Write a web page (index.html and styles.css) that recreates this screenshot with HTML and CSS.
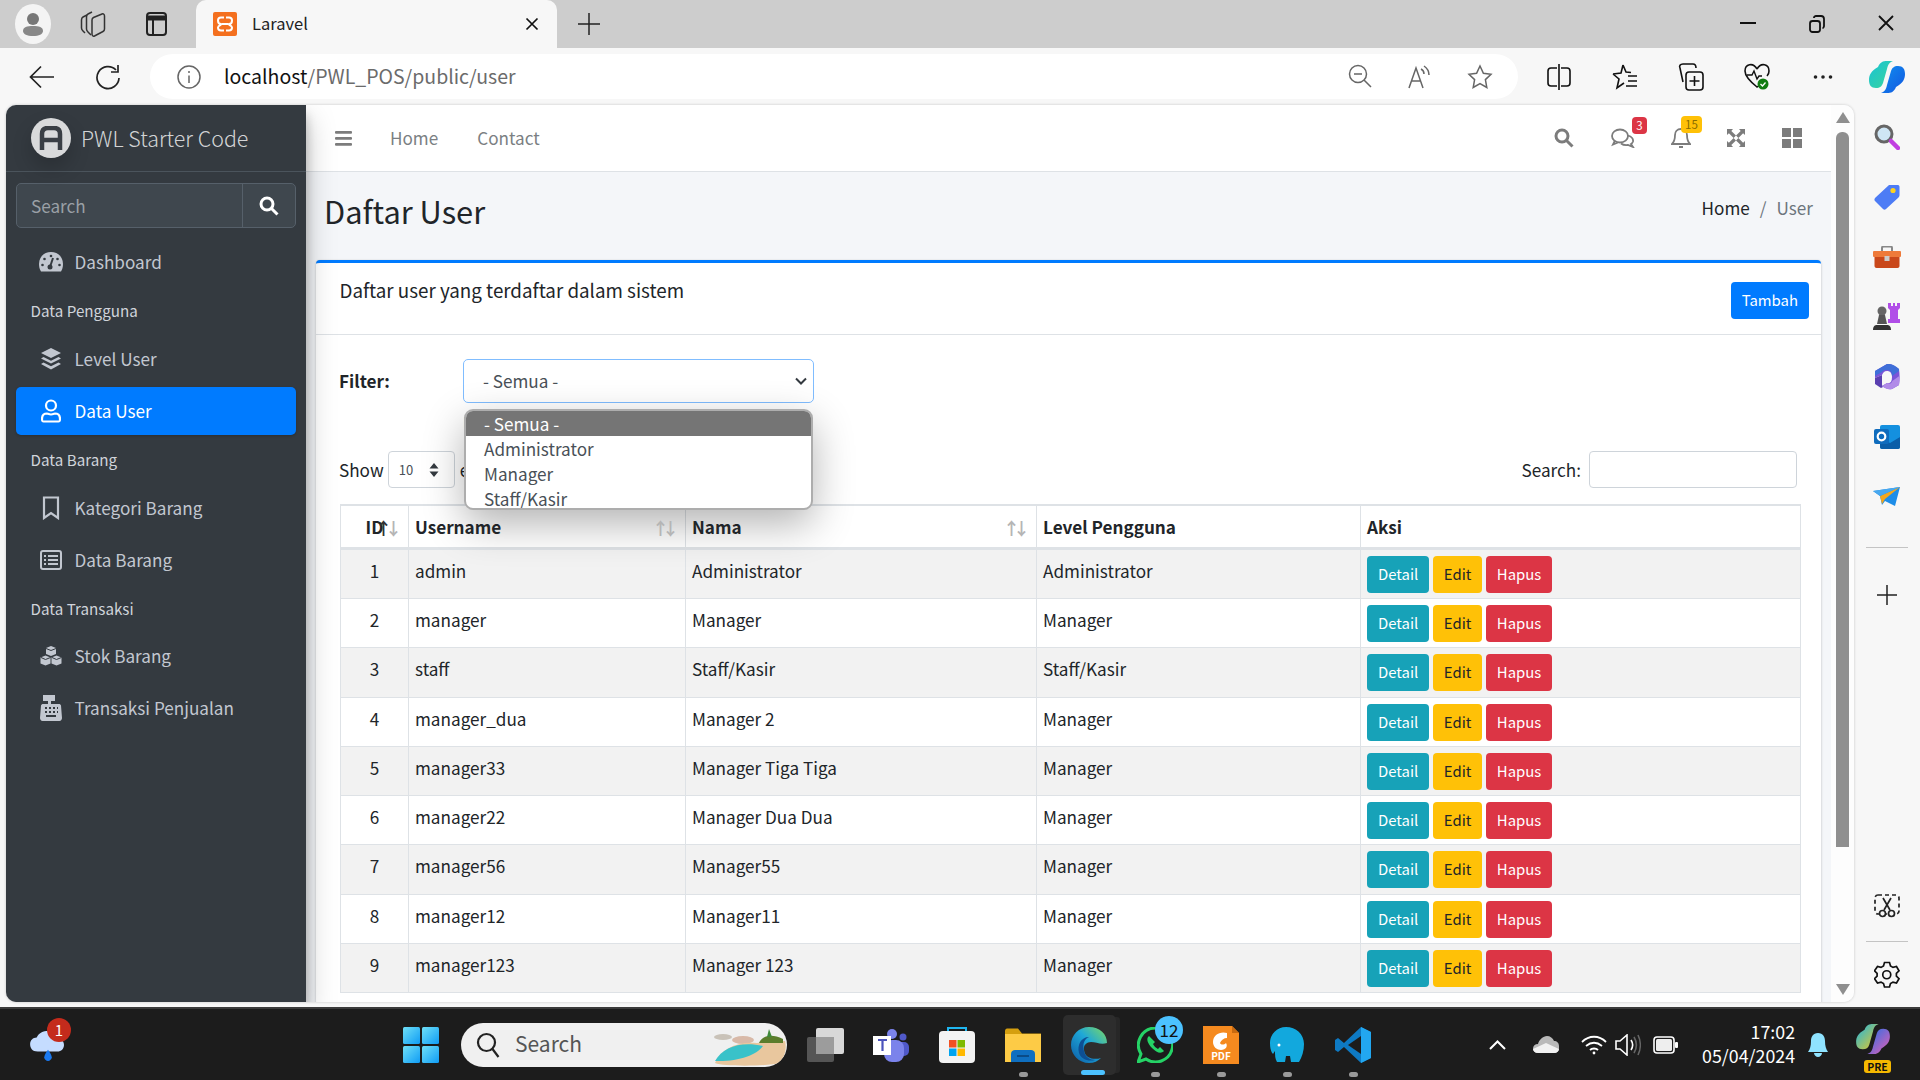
FILE: index.html
```html
<!DOCTYPE html>
<html lang="id">
<head>
    <meta charset="UTF-8">
    <title>Laravel</title>
    <link rel="stylesheet" href="styles.css">
</head>
<body>
<div class="screen">

    <div class="tab-strip">
        <div class="profile">
            <svg width="24" height="26" viewBox="0 0 24 26"><circle cx="12" cy="8" r="6" fill="#777"/><path d="M2 20c0-4 4-5 10-5s10 1 10 5c0 3-4 5-10 5S2 23 2 20z" fill="#888"/></svg>
        </div>
        <svg class="strip-collections" width="26" height="28" viewBox="0 0 26 28" fill="none" stroke="#333" stroke-width="1.5"><path d="M7 5L3 7c-1 .5-1.500 1.500-1.500 3v8c0 1 .5 2 1.500 3l2 2"/><path d="M12 2L8 4C7 4.500 6.500 5.500 6.500 7v12c0 1 .5 2 1.500 3l3 3"/><path d="M12 10c0-1 .5-2 1.500-2.500L22 4c1.500-.5 2.500.5 2.500 2v13c0 1-.5 2-1.500 2.500L14.500 26c-1.500.5-2.500-.5-2.500-2z"/></svg>
        <svg class="strip-tabs" width="24" height="26" viewBox="0 0 24 26" fill="none" stroke="#222" stroke-width="2"><rect x="3" y="2" width="19" height="22" rx="3"/><path d="M3 7h19" stroke-width="5"/><path d="M9 8v15"/></svg>
        <div class="tab">
            <span class="tab-icon">
                <svg width="18" height="18" viewBox="0 0 18 18" fill="none" stroke="#fff" stroke-width="2"><path d="M8 2.500H5C3 2.500 2 3.500 2 5.500S3 9 5 9 2 10.500 2 12.500s1 3 3 3h3"/><path d="M10 2.500h3c2 0 3 1 3 3S15 9 13 9s3 1.500 3 3.500-1 3-3 3h-3"/><path d="M6 9h6"/></svg>
            </span>
            <span class="tab-title">Laravel</span>
            <svg class="tab-close" width="14" height="14" viewBox="0 0 14 14" stroke="#111" stroke-width="1.7"><path d="M1.500 1.500l11 11M12.500 1.500l-11 11"/></svg>
        </div>
        <svg class="strip-plus" width="22" height="22" viewBox="0 0 22 22" stroke="#222" stroke-width="1.5"><path d="M11 0v22M0 11h22"/></svg>
        <div class="window-btns">
            <span class="window-btn"><svg width="16" height="16" viewBox="0 0 16 16" stroke="#111" stroke-width="2"><path d="M0 8h16"/></svg></span>
            <span class="window-btn"><svg width="16" height="18" viewBox="0 0 16 18" fill="none" stroke="#111" stroke-width="1.8"><rect x="1" y="6" width="10" height="11" rx="2.500"/><path d="M5 3V2.500C5 1.600 6 1 7 1h5c2 0 3 1 3 3v7c0 1-1 2-1.500 2"/></svg></span>
            <span class="window-btn"><svg width="16" height="16" viewBox="0 0 16 16" stroke="#111" stroke-width="1.800"><path d="M1 1l14 14M15 1L1 15"/></svg></span>
        </div>
    </div>

    <div class="toolbar">
        <svg class="tool-back" width="26" height="24" viewBox="0 0 26 24" fill="none" stroke="#222" stroke-width="1.700"><path d="M25 12H2M12 1.500L1.500 12 12 22.500"/></svg>
        <svg class="tool-reload" width="26" height="26" viewBox="0 0 26 26" fill="none" stroke="#222" stroke-width="1.700"><path d="M21 6a11 11 0 1 0 3 8"/><path d="M23 1v7h-7"/></svg>
        <div class="address">
            <svg class="address-info" width="24" height="24" viewBox="0 0 24 24" fill="none" stroke="#666" stroke-width="1.500"><circle cx="12" cy="12" r="11"/><path d="M12 10.500V18M12 6v2"/></svg>
            <span class="url"><b>localhost</b>/PWL_POS/public/user</span>
            <div class="address-tools">
                <span class="address-tool"><svg width="24" height="24" viewBox="0 0 24 24" fill="none" stroke="#666" stroke-width="1.500"><circle cx="10" cy="10" r="8.500"/><path d="M16 16l7 7M6 10h8"/></svg></span>
                <span class="address-tool"><svg width="26" height="26" viewBox="0 0 26 26" fill="none" stroke="#666" stroke-width="1.500"><path d="M2 24L9 4l7 20M4.500 17h9"/><path d="M14 5c2 1 3 3 3 5M17 2c3 2 5 5 5 9"/></svg></span>
                <span class="address-tool"><svg width="26" height="26" viewBox="0 0 26 26" fill="none" stroke="#666" stroke-width="1.500"><path d="M13 2l3.400 7.200 7.600 1-5.600 5.400 1.400 7.900L13 19.700l-6.800 3.800 1.400-7.900L2 10.200l7.600-1z"/></svg></span>
            </div>
        </div>
        <div class="tool-group">
            <span class="tool-btn"><svg width="24" height="26" viewBox="0 0 24 26" fill="none" stroke="#111" stroke-width="1.600"><path d="M10 4H4C2 4 1 5 1 7v12c0 2 1 3 3 3h6M14 4h6c2 0 3 1 3 3v12c0 2-1 3-3 3h-6M12 0v26"/></svg></span>
            <span class="tool-btn"><svg width="26" height="26" viewBox="0 0 26 26" fill="none" stroke="#111" stroke-width="1.600"><path d="M11 1l3 7 5 .5M1 10l6 5-2 9 7-5M1 10l8-1 2-8"/><path d="M16 12h9M16 17h9M14 22h11"/></svg></span>
            <span class="tool-btn"><svg width="26" height="28" viewBox="0 0 26 28" fill="none" stroke="#111" stroke-width="1.600"><path d="M15 1H5C2 1 1 3 2 5l3 14"/><path d="M15 1c2 0 3 2 3 4"/><rect x="8" y="9" width="17" height="18" rx="3"/><path d="M16.500 13v10M11.500 18h10"/></svg></span>
            <span class="tool-btn"><svg width="26" height="28" viewBox="0 0 26 28"><path d="M13 6C9-1 1 1 1 8c0 6 7 12 12 16 2-1 5-4 7-6M13 6c4-7 12-5 12 2 0 2-1 4-2 5" fill="none" stroke="#111" stroke-width="1.600"/><path d="M3 12h5l2-4 3 8 2-3h3" fill="none" stroke="#111" stroke-width="1.400"/><circle cx="19" cy="21" r="5.500" fill="#107c10"/><path d="M16.500 21l2 2 3-3.500" fill="none" stroke="#fff" stroke-width="1.300"/></svg></span>
            <span class="tool-btn"><svg width="20" height="6" viewBox="0 0 20 6" fill="#222"><circle cx="2.500" cy="3" r="1.800"/><circle cx="10" cy="3" r="1.800"/><circle cx="17.500" cy="3" r="1.800"/></svg></span>
            <span class="tool-btn copilot-slot">
                <svg width="36" height="32" viewBox="0 0 36 32"><defs><linearGradient id="cop1" x1="0" y1="0" x2="1" y2="1"><stop offset="0" stop-color="#19c3d6"/><stop offset="1" stop-color="#3bd59a"/></linearGradient><linearGradient id="cop2" x1="0" y1="0" x2="1" y2="1"><stop offset="0" stop-color="#0f8ff0"/><stop offset="1" stop-color="#1357e0"/></linearGradient></defs><path d="M9 6c2-5 5-6 9-6h6c-3 1-5 3-6 8l-4 14c-1 3-3 5-7 5-5 0-7-3-7-8 0-5 2-9 9-13z" fill="url(#cop1)"/><path d="M27 26c-2 5-5 6-9 6h-6c3-1 5-3 6-8l4-14c1-3 3-5 7-5 5 0 7 3 7 8 0 5-2 9-9 13z" fill="url(#cop2)"/></svg>
            </span>
        </div>
    </div>

    <div class="middle">
        <div class="viewport">
            <aside class="sidebar">
                <div class="brand">
                    <span class="brand-logo">
                        <svg width="24" height="24" viewBox="0 0 24 24" fill="none" stroke="#3a3f45" stroke-width="4.500"><path d="M3 24V8c0-4 2-6 6-6h6c4 0 6 2 6 6v16M3 14h18"/></svg>
                    </span>
                    <span class="brand-text">PWL Starter Code</span>
                </div>
                <div class="side-search">
                    <input class="side-search-input" type="text" placeholder="Search">
                    <span class="side-search-btn">
                        <svg width="20" height="20" viewBox="0 0 20 20" fill="none" stroke="#fff" stroke-width="3"><circle cx="8" cy="8" r="6"/><path d="M12.500 12.500L18.500 18.500"/></svg>
                    </span>
                </div>
                <nav class="side-nav">
                    <a class="nav-link"><span class="nav-icon"><svg width="24" height="20" viewBox="0 0 24 20"><path d="M12 0C5 0 0 5 0 12c0 3 .6 5 2 7.500h20c1.400-2.500 2-4.500 2-7.500C24 5 19 0 12 0z" fill="#c2c7d0"/><path d="M11 15l3-9" stroke="#343a40" stroke-width="2"/><circle cx="11" cy="15" r="2.500" fill="#343a40"/><circle cx="12" cy="4" r="1.300" fill="#343a40"/><circle cx="5.500" cy="7" r="1.300" fill="#343a40"/><circle cx="18.500" cy="7" r="1.300" fill="#343a40"/><circle cx="3.500" cy="13" r="1.300" fill="#343a40"/><circle cx="20.500" cy="13" r="1.300" fill="#343a40"/></svg></span><span>Dashboard</span></a>
                    <div class="nav-header">Data Pengguna</div>
                    <a class="nav-link"><span class="nav-icon"><svg width="22" height="22" viewBox="0 0 22 22" fill="#c2c7d0"><path d="M11 0l10 5-10 5L1 5z"/><path d="M3.500 9L1 10.500l10 5 10-5L18.500 9 11 12.800z"/><path d="M3.500 14.500L1 16l10 5.500L21 16l-2.500-1.500L11 18.300z"/></svg></span><span>Level User</span></a>
                    <a class="nav-link nav-link-active"><span class="nav-icon"><svg width="20" height="24" viewBox="0 0 20 24" fill="none" stroke="#fff" stroke-width="2.200"><circle cx="10" cy="6.500" r="5"/><path d="M2.500 22.500c-1.500 0-1.500-1-1.500-2.500 0-3.500 2-5.500 5-5.500 1.500.5 2.500 1 4 1s2.500-.5 4-1c3 0 5 2 5 5.500 0 1.500 0 2.500-1.500 2.500z"/></svg></span><span>Data User</span></a>
                    <div class="nav-header">Data Barang</div>
                    <a class="nav-link"><span class="nav-icon"><svg width="18" height="24" viewBox="0 0 18 24" fill="none" stroke="#c2c7d0" stroke-width="2.200"><path d="M2 1.500h14v20.500l-7-5-7 5z"/></svg></span><span>Kategori Barang</span></a>
                    <a class="nav-link"><span class="nav-icon"><svg width="22" height="20" viewBox="0 0 22 20" fill="none" stroke="#c2c7d0" stroke-width="2"><rect x="1" y="1" width="20" height="18" rx="2"/><path d="M8 6h10M8 10h10M8 14h10M4 6h2M4 10h2M4 14h2"/></svg></span><span>Data Barang</span></a>
                    <div class="nav-header">Data Transaksi</div>
                    <a class="nav-link"><span class="nav-icon"><svg width="22" height="20" viewBox="0 0 22 20" fill="#c2c7d0"><path d="M11 0l5 2v6l-5 2-5-2V2z"/><path d="M5.500 9.500l5 2v6l-5 2-5-2v-6z"/><path d="M16.500 9.500l5 2v6l-5 2-5-2v-6z"/><path d="M6 2.500l5 2 5-2M1 11.500l4.500 2 5-2M12 11.500l4.500 2 5-2" fill="none" stroke="#343a40"/></svg></span><span>Stok Barang</span></a>
                    <a class="nav-link"><span class="nav-icon"><svg width="22" height="26" viewBox="0 0 22 26" fill="#c2c7d0"><path d="M3 0h12v6h-4v3h8c1 0 1.500.5 2 1.500l1 12.500c0 1.500-1 3-2.500 3h-17C1 26 0 24.500 0 23l1-12.500C1.500 9.500 2 9 3 9h5V6H3z"/><path d="M5 13h2M9 13h2M13 13h2M17 13h1M5 17h2M9 17h2M13 17h2M17 17h1M6 21h10" stroke="#343a40" stroke-width="1.800"/></svg></span><span>Transaksi Penjualan</span></a>
                </nav>
            </aside>

            <main class="main">
                <div class="navbar">
                    <svg class="nav-burger" width="17" height="15" viewBox="0 0 17 15" fill="#7c7c7c"><rect width="17" height="2.800" rx="1"/><rect y="6" width="17" height="2.800" rx="1"/><rect y="12" width="17" height="2.800" rx="1"/></svg>
                    <a class="top-link top-link-home">Home</a>
                    <a class="top-link top-link-contact">Contact</a>
                    <div class="top-icons">
                        <span class="top-icon"><svg width="20" height="20" viewBox="0 0 20 20" fill="none" stroke="#7c7c7c" stroke-width="3"><circle cx="8" cy="8" r="6"/><path d="M12.500 12.500L18.500 18.500"/></svg></span>
                        <span class="top-icon top-icon-comments">
                            <svg width="24" height="20" viewBox="0 0 24 20" fill="none" stroke="#7c7c7c" stroke-width="1.800"><ellipse cx="9" cy="8" rx="8" ry="6.500"/><path d="M4 12.500L2 16.500l5-2"/><path d="M17 7.500c3 1 5.500 3 5 6-.3 1-1 2-2 2.500l2 3-5-2c-3 .5-5 0-7-1.500"/></svg>
                            <span class="badge badge-red">3</span>
                        </span>
                        <span class="top-icon top-icon-bell">
                            <svg width="20" height="22" viewBox="0 0 20 22" fill="none" stroke="#7c7c7c" stroke-width="1.800"><path d="M10 2c-4 0-6 3-6 6 0 5-1 7-3 9h18c-2-2-3-4-3-9 0-3-2-6-6-6z"/><path d="M8 20h4"/></svg>
                            <span class="badge badge-yellow">15</span>
                        </span>
                        <span class="top-icon top-icon-expand"><svg width="18" height="18" viewBox="0 0 18 18" fill="#7c7c7c"><path d="M0 0h6L4.300 1.900 9 6.600 6.600 9 1.900 4.300 0 6zM18 0v6l-1.900-1.700L11.400 9 9 6.600l4.700-4.700L12 0zM0 18v-6l1.900 1.700L6.600 9 9 11.400l-4.700 4.700L6 18zM18 18h-6l1.700-1.900L9 11.400 11.400 9l4.700 4.700L18 12z"/></svg></span>
                        <span class="top-icon top-icon-grid"><svg width="20" height="20" viewBox="0 0 20 20" fill="#7c7c7c"><rect width="9" height="9"/><rect x="11" width="9" height="9"/><rect y="11" width="9" height="9"/><rect x="11" y="11" width="9" height="9"/></svg></span>
                    </div>
                </div>

                <div class="content-header">
                    <h1 class="page-title">Daftar User</h1>
                    <div class="breadcrumb">
                        <a class="crumb-link">Home</a>
                        <span class="crumb-sep">/</span>
                        <span class="crumb-now">User</span>
                    </div>
                </div>

                <div class="card">
                    <div class="card-header">
                        <h3 class="card-title">Daftar user yang terdaftar dalam sistem</h3>
                        <a class="btn btn-primary btn-add">Tambah</a>
                    </div>
                    <div class="card-body">
                        <div class="filter-row">
                            <label class="filter-label">Filter:</label>
                            <div class="filter-field">
                                <div class="select-box">
                                    <span>- Semua -</span>
                                    <svg width="12" height="8" viewBox="0 0 12 8" fill="none" stroke="#343a40" stroke-width="2"><path d="M1 1.500l5 5 5-5"/></svg>
                                </div>
                                <small class="filter-help">Level Pengguna</small>
                                <ul class="select-popup">
                                    <li class="popup-option popup-selected">- Semua -</li>
                                    <li class="popup-option">Administrator</li>
                                    <li class="popup-option">Manager</li>
                                    <li class="popup-option">Staff/Kasir</li>
                                </ul>
                            </div>
                        </div>

                        <div class="table-tools">
                            <div class="length-control">
                                <span>Show</span>
                                <div class="length-select">
                                    <span>10</span>
                                    <svg width="10" height="14" viewBox="0 0 10 14" fill="#343a40"><path d="M5 0l4.500 5.500h-9zM5 14L.5 8.500h9z"/></svg>
                                </div>
                                <span class="length-after">entries</span>
                            </div>
                            <div class="search-control">
                                <label>Search:</label>
                                <input class="search-input" type="text">
                            </div>
                        </div>

                        <table class="user-table">
                            <colgroup>
                                <col class="col-id"><col class="col-username"><col class="col-name"><col class="col-level"><col class="col-action">
                            </colgroup>
                            <thead>
                                <tr>
                                    <th class="cell-id">ID<span class="sort-arrows"><i class="sort-up">↑</i><i>↓</i></span></th>
                                    <th>Username<span class="sort-arrows"><i>↑</i><i>↓</i></span></th>
                                    <th>Nama<span class="sort-arrows"><i>↑</i><i>↓</i></span></th>
                                    <th>Level Pengguna</th>
                                    <th>Aksi</th>
                                </tr>
                            </thead>
                            <tbody>
                                <tr><td class="cell-id">1</td><td>admin</td><td>Administrator</td><td>Administrator</td><td><div class="row-btns"><a class="btn btn-info">Detail</a><a class="btn btn-warning">Edit</a><a class="btn btn-danger">Hapus</a></div></td></tr>
                                <tr><td class="cell-id">2</td><td>manager</td><td>Manager</td><td>Manager</td><td><div class="row-btns"><a class="btn btn-info">Detail</a><a class="btn btn-warning">Edit</a><a class="btn btn-danger">Hapus</a></div></td></tr>
                                <tr><td class="cell-id">3</td><td>staff</td><td>Staff/Kasir</td><td>Staff/Kasir</td><td><div class="row-btns"><a class="btn btn-info">Detail</a><a class="btn btn-warning">Edit</a><a class="btn btn-danger">Hapus</a></div></td></tr>
                                <tr><td class="cell-id">4</td><td>manager_dua</td><td>Manager 2</td><td>Manager</td><td><div class="row-btns"><a class="btn btn-info">Detail</a><a class="btn btn-warning">Edit</a><a class="btn btn-danger">Hapus</a></div></td></tr>
                                <tr><td class="cell-id">5</td><td>manager33</td><td>Manager Tiga Tiga</td><td>Manager</td><td><div class="row-btns"><a class="btn btn-info">Detail</a><a class="btn btn-warning">Edit</a><a class="btn btn-danger">Hapus</a></div></td></tr>
                                <tr><td class="cell-id">6</td><td>manager22</td><td>Manager Dua Dua</td><td>Manager</td><td><div class="row-btns"><a class="btn btn-info">Detail</a><a class="btn btn-warning">Edit</a><a class="btn btn-danger">Hapus</a></div></td></tr>
                                <tr><td class="cell-id">7</td><td>manager56</td><td>Manager55</td><td>Manager</td><td><div class="row-btns"><a class="btn btn-info">Detail</a><a class="btn btn-warning">Edit</a><a class="btn btn-danger">Hapus</a></div></td></tr>
                                <tr><td class="cell-id">8</td><td>manager12</td><td>Manager11</td><td>Manager</td><td><div class="row-btns"><a class="btn btn-info">Detail</a><a class="btn btn-warning">Edit</a><a class="btn btn-danger">Hapus</a></div></td></tr>
                                <tr><td class="cell-id">9</td><td>manager123</td><td>Manager 123</td><td>Manager</td><td><div class="row-btns"><a class="btn btn-info">Detail</a><a class="btn btn-warning">Edit</a><a class="btn btn-danger">Hapus</a></div></td></tr>
                            </tbody>
                        </table>
                    </div>
                </div>
            </main>

            <div class="page-scroll">
                <svg class="scroll-up" width="14" height="11" viewBox="0 0 14 11" fill="#8f8f8f"><path d="M7 0l7 11H0z"/></svg>
                <div class="scroll-thumb"></div>
                <svg class="scroll-down" width="14" height="11" viewBox="0 0 14 11" fill="#8f8f8f"><path d="M0 0h14L7 11z"/></svg>
            </div>
        </div>

        <div class="side-panel">
            <span class="panel-icon"><svg width="26" height="26" viewBox="0 0 26 26"><circle cx="10" cy="10" r="8" fill="#cfe6f5" stroke="#666" stroke-width="3"/><path d="M17 17l7 7" stroke="#c03ee0" stroke-width="4.500" stroke-linecap="round"/></svg></span>
            <span class="panel-icon"><svg width="26" height="26" viewBox="0 0 26 26"><path d="M15 1h9c1 0 1.500 1 1.500 2v8c0 1-.5 2-1 2.500L12 25c-1 1-2 1-3 0l-8-8c-1-1-.5-2 0-3z" fill="#4d7cf5"/><circle cx="19" cy="6.500" r="2.600" fill="#ffd21e"/></svg></span>
            <span class="panel-icon"><svg width="28" height="22" viewBox="0 0 28 22"><path d="M9 6V2c0-1 .5-1.500 1.500-1.500h7C18.500.5 19 1 19 2v4" fill="none" stroke="#888" stroke-width="2"/><rect y="5" width="28" height="6" rx="1" fill="#ee7a3a"/><path d="M1.500 11h25v9c0 1-1 2-2 2h-21c-1 0-2-1-2-2z" fill="#c9481b"/><rect x="11.500" y="10" width="5" height="5" fill="#ccc"/></svg></span>
            <span class="panel-icon"><svg width="28" height="28" viewBox="0 0 28 28"><circle cx="9" cy="8" r="4.500" fill="#666"/><path d="M6 12h6l2 9H4z" fill="#555"/><path d="M0 27c0-4 2-5 4-5h10c2 0 4 1 4 5z" fill="#333"/><path d="M15 0h3v3h2V0h2v3h2V0h3v5l-2 2v9h2v4H15v-4h2V7l-2-2z" fill="#b14ee8"/></svg></span>
            <span class="panel-icon"><svg width="26" height="26" viewBox="0 0 26 26"><path d="M13 0c4-.5 6 1 12 5 .8 5 .8 11 0 16l-7 4c-4 1-7-1-10-3l5-3c3 1 5-1 5-6 0-4-2-6-5-6-3 0-4 2-5 4L1 14V7z" fill="#7a54d8"/><path d="M13 0L1 7v5l7-4c2-2 3-2 5-2 3 0 5 2 5 6l7-5V5C21 1.500 17-.5 13 0z" fill="#3f6fd8"/><path d="M1 14l7-3v9c0 1 0 2 1 3l-2 1-6-4z" fill="#5a3fb0"/><path d="M8 22c3 2 6 4 10 3l7-4c.5-3 .5-6 .3-9l-7 5c-1 3-3 3-5 2z" fill="#b18be8"/></svg></span>
            <span class="panel-icon"><svg width="26" height="26" viewBox="0 0 26 26"><rect x="6" y="1" width="20" height="24" rx="2" fill="#1490df"/><path d="M6 13l10 6 10-6v10c0 1-1 2-2 2H8c-1 0-2-1-2-2z" fill="#0a5ea8"/><rect y="5" width="15" height="15" rx="2" fill="#0f6cbd"/><circle cx="7.500" cy="12.500" r="3.800" fill="none" stroke="#fff" stroke-width="2.200"/></svg></span>
            <span class="panel-icon"><svg width="28" height="20" viewBox="0 0 28 20"><path d="M0 4l27-4-5 19-10-5-3 4-2-9z" fill="#1d8de8"/><path d="M7 9l20-9-15 12-3 5z" fill="#f3a71d"/><path d="M0 4l7 5 20-9z" fill="#48a8ef"/></svg></span>
            <span class="panel-divider"></span>
            <span class="panel-icon panel-add"><svg width="20" height="20" viewBox="0 0 20 20" stroke="#222" stroke-width="1.500"><path d="M10 0v20M0 10h20"/></svg></span>
            <span class="panel-icon panel-bottom"><svg width="26" height="24" viewBox="0 0 26 24" fill="none" stroke="#222" stroke-width="1.700"><rect x="1" y="1" width="24" height="19" rx="3" stroke-dasharray="4 3"/><path d="M9 4l7 12M17 4l-7 12"/><circle cx="8.500" cy="19.500" r="3" fill="#f7f7f7"/><circle cx="17.500" cy="19.500" r="3" fill="#f7f7f7"/></svg></span>
            <span class="panel-divider panel-divider-low"></span>
            <span class="panel-icon panel-gear"><svg width="26" height="27.500" viewBox="0 0 26 27.500" fill="none" stroke="#111" stroke-width="1.700"><path d="M10.500 1.500h5l1 3.500 2.500 1.400 3.500-.9 2.500 4.300-2.600 2.500v2.900l2.600 2.500-2.500 4.300-3.500-.9-2.500 1.400-1 3.500h-5l-1-3.500-2.500-1.400-3.500.9-3-4.300 2.600-2.500v-2.900L.5 9.800l3-4.300 3.500.9L9.500 5z"/><circle cx="12.750" cy="13.750" r="4"/></svg></span>
        </div>
    </div>

    <div class="taskbar">
        <div class="weather">
            <svg width="36" height="32" viewBox="0 0 38 34"><path d="M8 24C2 24 0 20 0 16c0-4 3-7 7-7 2-5 7-7 12-7 6 0 10 4 11 9 4 0 6 3 6 6 0 4-3 7-7 7z" fill="#c5dcff"/><path d="M19 22c2 3 4 6 4 8s-2 4-4 4-4-2-4-4 2-5 4-8z" fill="#1a79f0"/></svg>
            <span class="weather-badge">1</span>
        </div>
        <span class="task-start">
            <svg width="36" height="36" viewBox="0 0 36 36"><defs><linearGradient id="win" x1="0" y1="0" x2="1" y2="1"><stop offset="0" stop-color="#6fe0f7"/><stop offset="1" stop-color="#0f9cf5"/></linearGradient></defs><rect width="17" height="17" rx="1.500" fill="url(#win)"/><rect x="19" width="17" height="17" rx="1.500" fill="url(#win)"/><rect y="19" width="17" height="17" rx="1.500" fill="url(#win)"/><rect x="19" y="19" width="17" height="17" rx="1.500" fill="url(#win)"/></svg>
        </span>
        <div class="task-search">
            <svg width="24" height="26" viewBox="0 0 24 26" fill="none" stroke="#222" stroke-width="2.200"><circle cx="10.500" cy="10.500" r="8.500"/><path d="M16.500 17l6 8"/></svg>
            <span class="task-search-text">Search</span>
            <svg class="task-beach" width="74" height="44" viewBox="0 0 74 44"><ellipse cx="10" cy="14" rx="9" ry="3" fill="#c9c2b8"/><ellipse cx="30" cy="17" rx="11" ry="4" fill="#d8b9a8"/><path d="M2 40c6-14 22-22 42-20l28-2c2 8 0 16-6 22-8 3-54 4-64 0z" fill="#e9c79e"/><path d="M2 38c8-14 26-20 48-15-6 9-26 16-48 15z" fill="#39c2c9"/><path d="M46 20c3-7 12-10 24-4v4z" fill="#5b7d2c"/><path d="M54 14l2-8 3 8z" fill="#3f8a3a"/></svg>
        </div>
        <span class="task-slot"><svg width="37" height="34" viewBox="0 0 37 34"><rect y="9" width="27" height="25" rx="2" fill="#555"/><rect x="9" width="28" height="26" rx="2" fill="#d8d8d8"/><rect x="9" y="9" width="18" height="17" fill="#9c9c9c"/></svg></span>
        <span class="task-slot"><svg width="36" height="34" viewBox="0 0 36 34"><circle cx="19" cy="6" r="5" fill="#7b83eb"/><circle cx="30" cy="9" r="3.500" fill="#5059c9"/><rect x="24" y="14" width="12" height="14" rx="5" fill="#5059c9"/><rect x="11" y="12" width="20" height="22" rx="8" fill="#7b83eb"/><rect y="8" width="18" height="19" fill="#fff"/><path d="M5 12h9M9.500 12v11" stroke="#4b53bc" stroke-width="2.200"/></svg></span>
        <span class="task-slot"><svg width="36" height="36" viewBox="0 0 36 36"><path d="M9 5V1h18v4" fill="none" stroke="#1fb6f0" stroke-width="2"/><rect y="4" width="36" height="32" rx="4" fill="#f3f3f3"/><rect x="10" y="13" width="7.500" height="7.500" fill="#f25022"/><rect x="18.500" y="13" width="7.500" height="7.500" fill="#7fba00"/><rect x="10" y="21.500" width="7.500" height="7.500" fill="#00a4ef"/><rect x="18.500" y="21.500" width="7.500" height="7.500" fill="#ffb900"/></svg></span>
        <span class="task-slot task-dot"><svg width="36" height="34" viewBox="0 0 36 34"><path d="M0 3c0-1.500 1-2.500 2-2.500h11l4 5h19V34H0z" fill="#d59f0f"/><rect y="6" width="36" height="28" fill="#fdcb46"/><path d="M6 34v-8c0-3 2-4 4-4h16c2 0 4 1 4 4v8z" fill="#0f6fc0"/><path d="M12 28h12" stroke="#0a3f75" stroke-width="1.500"/></svg></span>
        <span class="task-slot task-active">
            <svg width="36" height="36" viewBox="0 0 36 36"><defs><linearGradient id="edge" x1="0" y1="1" x2="1" y2="0"><stop offset="0" stop-color="#0c59a4"/><stop offset=".55" stop-color="#1ea7d8"/><stop offset="1" stop-color="#7fdb5f"/></linearGradient></defs><path d="M18 0C8 0 0 8 0 18c0 10 8 18 18 18 5 0 9-2 12-5-6 2-16 1-17-8-1-5 3-8 7-8 5 0 10 3 16 1C36 7 29 0 18 0z" fill="url(#edge)"/><path d="M8 26c-2-8 2-16 10-16-7 3-6 11-5 14 1 6 6 9 11 9-7 2-14-1-16-7z" fill="#0d4f94"/></svg>
            <i class="task-indicator"></i>
        </span>
        <span class="task-slot task-dot">
            <svg width="36" height="36" viewBox="0 0 36 36"><path d="M18 1a17 17 0 0 0-14 26L1 35l8-3A17 17 0 1 0 18 1z" fill="none" stroke="#25d366" stroke-width="3"/><path d="M12 9c-3 2-2 7 3 12s9 6 12 3l-4-4-2 2c-2-1-4-3-5-5l2-2z" fill="#25d366"/></svg>
            <span class="whatsapp-badge">12</span>
        </span>
        <span class="task-slot task-dot">
            <svg width="36" height="38" viewBox="0 0 36 38"><path d="M0 0h29l7 7v31H0z" fill="#f58a1f"/><path d="M29 0l7 7h-7z" fill="#c86a10"/><path d="M24 7c-7-2-14 2-14 9 0 5 4 8 8 8 5 0 7-4 5-7-2 2-5 2-6 0 1-3 4-5 7-5z" fill="#fff"/></svg>
            <span class="pdf-label">PDF</span>
        </span>
        <span class="task-slot task-dot"><svg width="34" height="36" viewBox="0 0 34 36"><path d="M16 0c10 0 18 7 18 17 0 7-2 13-5 18h-8l-1-6h-4l-1 6H7c-2-3-2-7-2-11l-2 3c-2-2-3-6-3-11C0 7 7 0 16 0z" fill="#12a8dd"/><circle cx="9" cy="18" r="1.500" fill="#fff"/></svg></span>
        <span class="task-slot task-dot"><svg width="36" height="36" viewBox="0 0 36 36"><path d="M26 0l10 5v26l-10 5L9 20 3 25 0 23V13l3-2 6 5z" fill="#0e7ac4"/><path d="M26 0l10 5v26l-10 5z" fill="#22a7f0"/><path d="M26 9L13 18l13 9z" fill="#1c1c1c"/></svg></span>

        <div class="tray">
            <svg class="tray-chevron" width="17" height="10" viewBox="0 0 17 10" fill="none" stroke="#fff" stroke-width="2"><path d="M1 9l7.500-7.500L16 9"/></svg>
            <svg class="tray-cloud" width="26" height="17" viewBox="0 0 26 17"><path d="M5 17c-3 0-5-2-5-4.500S2 8 5 8c1-4 5-8 9-8 3 0 6 2 7 5 3 0 5 2 5 5v2c0 3-2 5-5 5z" fill="#b9b9b9"/><path d="M5 17c-3 0-5-2-5-4l13-6 13 6c0 2-2 4-5 4z" fill="#f1f1f1"/></svg>
            <svg class="tray-wifi" width="26" height="20" viewBox="0 0 26 20" fill="none" stroke="#fff" stroke-width="1.800"><path d="M1 7c7-7 17-7 24 0M5 11c5-4 11-4 16 0M9 15c2-2 6-2 8 0"/><circle cx="13" cy="18" r="1.400" fill="#fff" stroke="none"/></svg>
            <svg class="tray-sound" width="26" height="22" viewBox="0 0 26 22" fill="none" stroke="#fff" stroke-width="1.600"><path d="M1 7h4l7-6v20l-7-6H1z"/><path d="M16 6c2 3 2 7 0 10"/><path d="M19 3c3 5 3 11 0 16M23 1c3 6 3 14 0 20" stroke="#666"/></svg>
            <svg class="tray-battery" width="25" height="18" viewBox="0 0 25 18"><rect x="1" y="1" width="20" height="16" rx="3" fill="none" stroke="#fff" stroke-width="1.600"/><rect x="3" y="3" width="16" height="12" rx="1.500" fill="#eee"/><rect x="22" y="6" width="3" height="6" rx="1" fill="#fff"/></svg>
            <div class="clock"><span>17:02</span><span>05/04/2024</span></div>
            <svg class="tray-bell" width="20" height="24" viewBox="0 0 20 24" fill="#8fe3ff"><path d="M10 0C5 0 3 4 3 8c0 5-1 8-3 11h20c-2-3-3-6-3-11 0-4-2-8-7-8z"/><path d="M6 20h8c0 2-2 4-4 4s-4-2-4-4z"/></svg>
            <div class="tray-copilot">
                <svg width="34" height="30" viewBox="0 0 36 32"><defs><linearGradient id="cop3" x1="0" y1="0" x2="1" y2="1"><stop offset="0" stop-color="#19b6e6"/><stop offset="1" stop-color="#f2c81e"/></linearGradient><linearGradient id="cop4" x1="0" y1="0" x2="1" y2="1"><stop offset="0" stop-color="#1f6fe8"/><stop offset="1" stop-color="#e860b4"/></linearGradient></defs><path d="M9 6c2-5 5-6 9-6h6c-3 1-5 3-6 8l-4 14c-1 3-3 5-7 5-5 0-7-3-7-8 0-5 2-9 9-13z" fill="url(#cop3)"/><path d="M27 26c-2 5-5 6-9 6h-6c3-1 5-3 6-8l4-14c1-3 3-5 7-5 5 0 7 3 7 8 0 5-2 9-9 13z" fill="url(#cop4)"/></svg>
                <span class="pre-badge">PRE</span>
            </div>
        </div>
    </div>

</div>
</body>
</html>
```

FILE: styles.css
```css
* {
    box-sizing: border-box;
}

html,
body {
    margin: 0;
    padding: 0;
}

body {
    font-family: "Noto Sans CJK SC", "Noto Sans", sans-serif;
    font-size: 17.150px;
    line-height: 30px;
    color: #212529;
}

.screen {
    width: 1920px;
    height: 1080px;
    display: flex;
    flex-direction: column;
    overflow: hidden;
    background-color: #f7f7f7;
}

/* browser tabs */
.tab-strip {
    height: 48px;
    flex: none;
    display: flex;
    align-items: center;
    padding-left: 15px;
    background-color: #cdcdcd;
}

.profile {
    width: 36px;
    height: 40px;
    border-radius: 50%;
    background-color: #f4f4f4;
    display: flex;
    align-items: center;
    justify-content: center;
}

.strip-collections {
    margin-left: 29px;
}

.strip-tabs {
    margin-left: 38px;
}

.tab {
    width: 361px;
    height: 48px;
    margin-left: 28px;
    padding: 0 18px 0 17px;
    display: flex;
    align-items: center;
    background-color: #f7f7f7;
    border-radius: 10px 10px 0 0;
}

.tab-icon {
    width: 24px;
    height: 24px;
    display: flex;
    align-items: center;
    justify-content: center;
    background-color: #f4701f;
    border-radius: 2px;
}

.tab-title {
    margin-left: 15px;
    margin-top: -2px;
    font-size: 16.500px;
    color: #222;
}

.tab-close {
    margin-left: auto;
}

.strip-plus {
    margin-left: 21px;
}

.window-btns {
    margin-left: auto;
    display: flex;
}

.window-btn {
    width: 69px;
    display: flex;
    justify-content: center;
}

/* address row */
.toolbar {
    height: 57px;
    flex: none;
    display: flex;
    align-items: center;
    padding-left: 29px;
}

.tool-reload {
    margin-left: 40px;
}

.address {
    width: 1368px;
    height: 45px;
    margin-left: 29px;
    padding: 0 8px 0 27px;
    display: flex;
    align-items: center;
    background-color: #fff;
    border-radius: 23px;
}

.url {
    margin-left: 23px;
    margin-top: -2px;
    font-size: 19.500px;
    color: #6b6b6b;
}

.url b {
    font-weight: 400;
    color: #111;
}

.address-tools {
    margin-left: auto;
    display: flex;
}

.address-tool {
    width: 60px;
    display: flex;
    justify-content: center;
}

.tool-group {
    margin-left: 8px;
    display: flex;
    align-items: center;
}

.tool-btn {
    width: 66px;
    display: flex;
    justify-content: center;
}

.copilot-slot {
    width: 62px;
}

/* browser content area */
.middle {
    height: 902px;
    flex: none;
    display: flex;
    padding-left: 6px;
}

.viewport {
    width: 1848px;
    height: 897px;
    display: flex;
    overflow: hidden;
    background-color: #f4f6f9;
    border-radius: 10px;
    box-shadow: 0 0 3px rgba(0, 0, 0, .2);
}

.sidebar {
    width: 300px;
    flex: none;
    position: relative;
    z-index: 2;
    background-color: #343a40;
    color: #c2c7d0;
    box-shadow: 0 14px 28px rgba(0, 0, 0, .25), 0 10px 10px rgba(0, 0, 0, .22);
}

.brand {
    height: 67px;
    display: flex;
    align-items: center;
    padding-left: 25px;
    border-bottom: 1px solid #4b545c;
}

.brand-logo {
    width: 40px;
    height: 40px;
    display: flex;
    align-items: center;
    justify-content: center;
    background-color: #d9dadb;
    border-radius: 50%;
    box-shadow: 0 10px 20px rgba(0, 0, 0, .19);
}

.brand-text {
    margin-left: 10px;
    font-size: 21.400px;
    font-weight: 300;
    color: rgba(255, 255, 255, .8);
}

.side-search {
    height: 45px;
    margin: 11px 10px 0;
    display: flex;
    background-color: #3f474e;
    border: 1px solid #56606a;
    border-radius: 5px;
}

.side-search-input {
    width: 226px;
    padding: 0 14px;
    font: inherit;
    background: none;
    border: 0;
    border-right: 1px solid #56606a;
    outline: none;
}

.side-search-input::placeholder {
    color: #9aa0a6;
}

.side-search-btn {
    flex: 1;
    display: flex;
    align-items: center;
    justify-content: center;
}

.side-nav {
    margin: 10px 10px 0;
}

.nav-link {
    height: 48px;
    margin-bottom: 4px;
    padding-left: 20px;
    display: flex;
    align-items: center;
    color: #c2c7d0;
    border-radius: 5px;
}

.nav-link-active {
    background-color: #007bff;
    color: #fff;
    box-shadow: 0 1px 3px rgba(0, 0, 0, .2);
}

.nav-icon {
    width: 30px;
    margin-right: 8.500px;
    display: flex;
    justify-content: center;
}

.nav-header {
    height: 44.800px;
    padding-left: 14.600px;
    font-size: 15.200px;
    line-height: 41px;
    color: #d0d4db;
}

/* page */
.main {
    width: 1525px;
    flex: none;
    overflow: hidden;
}

.navbar {
    height: 67px;
    display: flex;
    align-items: center;
    background-color: #fff;
    border-bottom: 1px solid #dee2e6;
}

.nav-burger {
    margin-left: 29px;
}

.top-link {
    color: #7b7f83;
}

.top-link-home {
    margin-left: 38px;
}

.top-link-contact {
    margin-left: 39px;
}

.top-icons {
    margin-left: auto;
    padding-right: 27px;
    display: flex;
    align-items: center;
}

.top-icon {
    position: relative;
    width: 24px;
    display: flex;
    justify-content: center;
}

.top-icon-comments {
    margin-left: 35px;
}

.top-icon-bell {
    margin-left: 34px;
}

.top-icon-expand {
    margin-left: 31px;
}

.top-icon-grid {
    margin-left: 32px;
}

.badge {
    position: absolute;
    top: -11px;
    height: 17px;
    font-size: 11.500px;
    line-height: 16px;
    text-align: center;
    border-radius: 4px;
}

.badge-red {
    right: -12px;
    width: 15px;
    color: #fff;
    background-color: #dc3545;
}

.badge-yellow {
    left: 12px;
    width: 21px;
    color: #8a6d00;
    background-color: #ffc107;
}

.content-header {
    height: 88px;
    display: flex;
    justify-content: space-between;
    padding: 0 18px 0 18px;
}

.page-title {
    margin: 17px 0 0;
    font-size: 30.800px;
    font-weight: 400;
    line-height: 43px;
}

.breadcrumb {
    margin-top: 21px;
    display: flex;
}

.crumb-sep {
    margin: 0 10px;
    color: #6c757d;
}

.crumb-now {
    color: #6c757d;
}

.card {
    margin: 0 10px;
    height: 800px;
    background-color: #fff;
    border-top: 3.750px solid #007bff;
    border-radius: 4px;
    box-shadow: 0 0 1px rgba(0, 0, 0, .125), 0 1px 3px rgba(0, 0, 0, .2);
}

.card-header {
    height: 72px;
    display: flex;
    justify-content: space-between;
    align-items: flex-start;
    padding: 0 12px 0 23.500px;
    border-bottom: 1px solid #dee2e6;
}

.card-title {
    margin: 12px 0 0;
    font-size: 18.800px;
    font-weight: 400;
    line-height: 30px;
}

.btn {
    height: 37px;
    padding: 0 11px;
    display: block;
    font-size: 14.900px;
    line-height: 36px;
    border-radius: 4px;
}

.btn-add {
    margin-top: 18.500px;
}

.btn-primary {
    color: #fff;
    background-color: #007bff;
}

.btn-info {
    color: #fff;
    background-color: #17a2b8;
}

.btn-warning {
    color: #212529;
    background-color: #ffc107;
}

.btn-danger {
    color: #fff;
    background-color: #dc3545;
}

.card-body {
    padding: 24px 21px 0 24px;
}

.filter-row {
    display: flex;
}

.filter-label {
    width: 124px;
    margin-left: -1px;
    font-weight: 700;
    line-height: 44px;
}

.filter-field {
    position: relative;
    width: 351px;
}

.select-box {
    height: 44px;
    padding: 0 6px 0 19px;
    display: flex;
    align-items: center;
    justify-content: space-between;
    color: #495057;
    background-color: #fff;
    border: 1px solid #80bdff;
    border-radius: 5px;
}

.filter-help {
    display: block;
    height: 24px;
    margin-top: 2px;
    font-size: 15px;
    line-height: 34px;
    color: #6c757d;
}

.select-popup {
    position: absolute;
    top: 50px;
    left: 1px;
    width: 349px;
    height: 101px;
    margin: 0;
    padding: 0;
    overflow: hidden;
    list-style: none;
    background-color: #fff;
    border: 2px solid #adadad;
    border-radius: 9px;
    box-shadow: 0 14px 40px rgba(0, 0, 0, .3);
}

.popup-option {
    height: 25px;
    padding-left: 18px;
    line-height: 25px;
    color: #495057;
}

.popup-selected {
    color: #fff;
    background-color: #757575;
}

.table-tools {
    margin-top: 22px;
    height: 37px;
    display: flex;
    justify-content: space-between;
    padding-right: 3px;
}

.length-control,
.search-control {
    display: flex;
    align-items: center;
}

.length-control {
    margin-left: -1px;
}

.length-select {
    width: 67px;
    height: 37px;
    margin-left: 4px;
    padding: 0 15px 0 10px;
    display: flex;
    align-items: center;
    justify-content: space-between;
    font-size: 13px;
    color: #495057;
    border: 1px solid #ced4da;
    border-radius: 4px;
}

.length-after {
    margin-left: 5px;
}

.search-input {
    width: 208px;
    height: 37px;
    margin-left: 8px;
    border: 1px solid #ced4da;
    border-radius: 4px;
    outline: none;
}

.user-table {
    width: 1460px;
    margin-top: 16px;
    table-layout: fixed;
    border-collapse: collapse;
    border-top: 2px solid #dee2e6;
}

.col-id {
    width: 68px;
}

.col-username {
    width: 277px;
}

.col-name {
    width: 351px;
}

.col-level {
    width: 324px;
}

.col-action {
    width: 440px;
}

.user-table th,
.user-table td {
    padding: 6px 6px 5px;
    vertical-align: top;
    text-align: left;
    border: 1px solid #dee2e6;
}

.user-table th {
    position: relative;
    height: 43px;
    font-weight: 700;
    border-top: 0;
    border-bottom: 3px solid #dee2e6;
}

.user-table tbody tr {
    height: 49.250px;
}

.user-table tbody tr:nth-child(odd) {
    background-color: #f2f2f2;
}

.user-table .cell-id {
    text-align: center;
}

.sort-arrows {
    position: absolute;
    top: 7px;
    right: 6px;
    display: flex;
    font-size: 17px;
    font-weight: 700;
    color: #b5b5b5;
}

.sort-arrows i {
    font-style: normal;
    margin-left: -7px;
}

.sort-arrows .sort-up {
    color: #b5b5b5;
}

.cell-id .sort-arrows .sort-up {
    color: #333;
}

.row-btns {
    display: flex;
    gap: 3.500px;
}

/* page scrollbar */
.page-scroll {
    width: 23px;
    flex: none;
    display: flex;
    flex-direction: column;
    align-items: center;
    background-color: #fdfdfd;
}

.scroll-up {
    margin-top: 7px;
}

.scroll-thumb {
    width: 13px;
    height: 715px;
    margin-top: 9px;
    background-color: #8f8f8f;
    border-radius: 6px 6px 0 0;
}

.scroll-down {
    margin-top: auto;
    margin-bottom: 7px;
}

/* edge side panel */
.side-panel {
    width: 66px;
    height: 902px;
    flex: none;
    padding-top: 2px;
    display: flex;
    flex-direction: column;
    align-items: center;
}

.panel-icon {
    height: 60px;
    flex: none;
    display: flex;
    align-items: center;
    justify-content: center;
}

.panel-divider {
    width: 42px;
    height: 1px;
    margin-top: 20px;
    flex: none;
    background-color: #c4c4c4;
}

.panel-add {
    margin-top: 17px;
}

.panel-bottom {
    height: 50px;
    margin-top: auto;
}

.panel-divider-low {
    margin-top: 10px;
}

.panel-gear {
    height: 50px;
    margin: 8px 0 7px;
}

/* windows taskbar */
.taskbar {
    height: 73px;
    flex: none;
    position: relative;
    display: flex;
    align-items: center;
    background-color: #1c1c1c;
    border-top: 2px solid #3b3b3b;
    color: #fff;
}

.weather {
    position: relative;
    width: 36px;
    height: 32px;
    margin-left: 30px;
}

.weather-badge {
    position: absolute;
    top: -11px;
    left: 17px;
    width: 24px;
    height: 24px;
    font-size: 15px;
    line-height: 23px;
    text-align: center;
    background-color: #c42b1c;
    border-radius: 50%;
}

.task-start {
    width: 66px;
    margin-left: 322px;
    display: flex;
    justify-content: center;
}

.task-search {
    width: 326px;
    height: 44px;
    margin: 0 5px 0 7px;
    padding-left: 15px;
    display: flex;
    align-items: center;
    background-color: #f0f0f0;
    border-radius: 22px;
    overflow: hidden;
}

.task-search-text {
    margin-left: 15px;
    margin-top: -3px;
    font-size: 21px;
    color: #555;
}

.task-beach {
    margin-left: auto;
}

.task-slot {
    position: relative;
    width: 66px;
    height: 60px;
    display: flex;
    align-items: center;
    justify-content: center;
}

.task-dot::after {
    content: "";
    position: absolute;
    left: 29px;
    bottom: -2px;
    width: 9px;
    height: 5px;
    background-color: #9a9a9a;
    border-radius: 3px;
}

.task-active {
    background-color: #2d2d2d;
    border-radius: 5px;
    width: 53px;
    margin: 0 6.500px;
    box-shadow: 6px 0 0 -2px #272727;
}

.task-indicator {
    position: absolute;
    left: 18px;
    bottom: 0;
    width: 24px;
    height: 5px;
    background-color: #4cc2ff;
    border-radius: 3px;
}

.whatsapp-badge {
    position: absolute;
    top: 1px;
    left: 33px;
    width: 28px;
    height: 28px;
    font-size: 17px;
    line-height: 27px;
    text-align: center;
    color: #111;
    background-color: #4cc2ff;
    border-radius: 50%;
}

.pdf-label {
    position: absolute;
    left: 0;
    right: 0;
    bottom: 13px;
    font-size: 10px;
    font-weight: 700;
    line-height: 12px;
    text-align: center;
    color: #fff;
}

.tray {
    position: absolute;
    right: 0;
    top: 0;
    bottom: 0;
    display: flex;
    align-items: center;
}

.tray-cloud {
    margin-left: 27px;
}

.tray-wifi {
    margin-left: 22px;
}

.tray-sound {
    margin-left: 8px;
}

.tray-battery {
    margin-left: 12px;
}

.clock {
    width: 117px;
    margin-top: -3px;
    display: flex;
    flex-direction: column;
    align-items: flex-end;
    font-size: 17.800px;
    line-height: 24px;
}

.tray-bell {
    margin-left: 13px;
}

.tray-copilot {
    position: relative;
    margin-left: 28px;
    margin-right: 30px;
    margin-top: -4px;
}

.pre-badge {
    position: absolute;
    left: 8px;
    bottom: -11px;
    width: 27px;
    height: 13px;
    font-size: 10.500px;
    font-weight: 700;
    line-height: 13px;
    text-align: center;
    color: #111;
    background-color: #f5b800;
    border-radius: 3px;
}
```
